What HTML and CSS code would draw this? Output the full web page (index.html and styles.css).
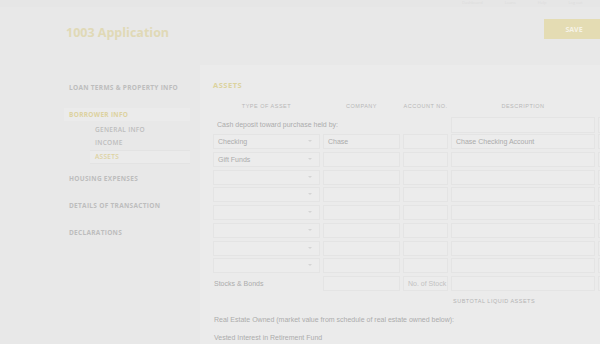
FILE: index.html
```html
<!DOCTYPE html>
<html lang="en">
<head>
    <meta charset="UTF-8">
    <title>1003 Application</title>
    <link rel="stylesheet" href="styles.css">
</head>
<body>
    <div class="topbar">
        <div class="top-links">
            <span>Dashboard</span><span>Loans</span><span>Help</span><span>Log out</span>
        </div>
    </div>

    <div class="header">
        <h1>1003 Application</h1>
        <button type="button" class="save">SAVE</button>
    </div>

    <div class="main">
        <!-- Section nav -->
        <div class="sidebar">
            <div class="nav-item nav-loan">LOAN TERMS &amp; PROPERTY INFO</div>
            <div class="nav-item nav-borrower active">BORROWER INFO</div>
            <div class="sub-item sub-general">GENERAL INFO</div>
            <div class="sub-item sub-income">INCOME</div>
            <div class="sub-item sub-assets active">ASSETS</div>
            <div class="nav-item nav-housing">HOUSING EXPENSES</div>
            <div class="nav-item nav-details">DETAILS OF TRANSACTION</div>
            <div class="nav-item nav-decl">DECLARATIONS</div>
        </div>

        <!-- Assets form -->
        <div class="content">
            <h3>ASSETS</h3>
            <div class="asset-grid">
                <div class="col-head">TYPE OF ASSET</div>
                <div class="col-head">COMPANY</div>
                <div class="col-head">ACCOUNT NO.</div>
                <div class="col-head">DESCRIPTION</div>
                <div class="col-head"></div>

                <div class="row-label span3">Cash deposit toward purchase held by:</div>
                <div class="field tall"></div>
                <div class="field tall"></div>

                <div class="select">Checking<span class="caret"></span></div>
                <div class="field">Chase</div>
                <div class="field"></div>
                <div class="field">Chase Checking Account</div>
                <div class="field"></div>

                <div class="select">Gift Funds<span class="caret"></span></div>
                <div class="field"></div>
                <div class="field"></div>
                <div class="field"></div>
                <div class="field"></div>

                <div class="select"><span class="caret"></span></div>
                <div class="field"></div><div class="field"></div><div class="field"></div><div class="field"></div>
                <div class="select"><span class="caret"></span></div>
                <div class="field"></div><div class="field"></div><div class="field"></div><div class="field"></div>
                <div class="select"><span class="caret"></span></div>
                <div class="field"></div><div class="field"></div><div class="field"></div><div class="field"></div>
                <div class="select"><span class="caret"></span></div>
                <div class="field"></div><div class="field"></div><div class="field"></div><div class="field"></div>
                <div class="select"><span class="caret"></span></div>
                <div class="field"></div><div class="field"></div><div class="field"></div><div class="field"></div>
                <div class="select"><span class="caret"></span></div>
                <div class="field"></div><div class="field"></div><div class="field"></div><div class="field"></div>

                <div class="row-label flush">Stocks &amp; Bonds</div>
                <div class="field"></div>
                <div class="field placeholder">No. of Stock</div>
                <div class="field"></div>
                <div class="field"></div>
            </div>

            <div class="subtotal">SUBTOTAL LIQUID ASSETS</div>

            <p class="line-label">Real Estate Owned (market value from schedule of real estate owned below):</p>
            <p class="line-label">Vested Interest in Retirement Fund</p>
        </div>
    </div>
</body>
</html>
```

FILE: styles.css
```css
body {
    margin: 0;
    background-color: #e8e8e8;
    font-family: "Open Sans", Arial, sans-serif;
    width: 600px;
    height: 344px;
    overflow: hidden;
}
.topbar {
    height: 7px;
    background-color: #e6e6e6;
    overflow: hidden;
}
.top-links {
    display: flex;
    gap: 22px;
    margin-left: 462px;
    font-size: 4px;
    line-height: 5px;
    color: #dcdcdc;
}
.header {
    height: 58px;
    display: flex;
    align-items: flex-start;
    justify-content: space-between;
}
h1 {
    margin: 17px 0 0 66px;
    font-size: 12.5px;
    font-weight: 700;
    color: #e0d9b6;
}
.save {
    margin-top: 12px;
    width: 60px;
    height: 20px;
    margin-right: -4px;
    border: none;
    background-color: #e4dcb3;
    color: #f6f3e7;
    font-family: "Open Sans", Arial, sans-serif;
    font-size: 7px;
    font-weight: 700;
    padding: 0;
    text-align: center;
}
.main {
    display: flex;
}
.sidebar {
    width: 200px;
    padding-top: 16px;
}
.nav-item, .sub-item {
    font-size: 6.5px;
    font-weight: 700;
    letter-spacing: 0.3px;
    color: #bdbdbd;
    height: 13px;
    line-height: 13px;
    white-space: nowrap;
}
.nav-item {
    padding-left: 69px;
}
.sub-item {
    margin-left: 90px;
    margin-right: 10px;
    padding-left: 5px;
    font-weight: 600;
}
.nav-borrower { margin-top: 14px; margin-left: 64px; margin-right: 10px; padding-left: 5px; }
.sub-general { margin-top: 2px; }
.sub-income { margin-top: 0; }
.sub-assets { margin-top: 1px; border-top: 1px solid #e3e3e3; border-bottom: 1px solid #e3e3e3; height: 12px; line-height: 12px; }
.nav-housing { margin-top: 8px; }
.nav-details { margin-top: 14px; }
.nav-decl { margin-top: 14px; }
.active {
    color: #ddd2a0;
    background-color: #ebebeb;
}
.content {
    flex: 1;
    background-color: #ebebeb;
    padding: 14px 0 0 13px;
    height: 279px;
    overflow: hidden;
}
h3 {
    margin: 0;
    font-size: 7.5px;
    font-weight: 700;
    letter-spacing: 0.5px;
    color: #dcd39e;
    height: 12px;
    line-height: 12px;
}
.asset-grid {
    margin-top: 11px;
    display: grid;
    grid-template-columns: 107px 77px 45px 144px 40px;
    grid-template-rows: 12px;
    grid-auto-rows: 15px;
    column-gap: 3px;
    row-gap: 2.7px;
    font-family: "Liberation Sans", Arial, sans-serif;
}
.col-head {
    font-size: 5.5px;
    letter-spacing: 0.5px;
    color: #b8b8b8;
    text-align: center;
    line-height: 8px;
}
.span3 {
    grid-column: span 3;
}
.row-label {
    font-size: 7px;
    color: #acacac;
    line-height: 15px;
    padding-left: 4px;
}
.row-label.flush {
    padding-left: 1px;
}
.field, .select {
    box-sizing: border-box;
    border: 1px solid #e4e4e4;
    background-color: #ececec;
    font-size: 7px;
    color: #ababab;
    line-height: 13px;
    padding-left: 4px;
    position: relative;
}
.tall {
    height: 16px;
}
.placeholder {
    color: #c2c2c2;
}
.caret {
    position: absolute;
    right: 7px;
    top: 5px;
    width: 4px;
    height: 2px;
    border-left: 2px solid transparent;
    border-right: 2px solid transparent;
    border-top: 2px solid #d4d4d4;
    box-sizing: border-box;
}
.subtotal {
    margin-top: 3px;
    margin-left: 240px;
    height: 14px;
    line-height: 14px;
    white-space: nowrap;
    font-family: "Liberation Sans", Arial, sans-serif;
    font-size: 5.5px;
    letter-spacing: 0.5px;
    color: #b4b4b4;
}
.line-label {
    margin: 5px 0 0 1px;
    font-family: "Liberation Sans", Arial, sans-serif;
    font-size: 7px;
    color: #acacac;
    line-height: 14px;
}
.line-label + .line-label {
    margin-top: 4px;
}
```
